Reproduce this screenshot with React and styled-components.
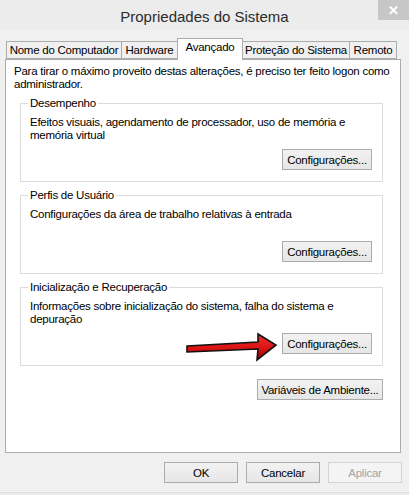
import React from "react";
import styled, { createGlobalStyle } from "styled-components";

// ===== Global =====

const GlobalStyle = createGlobalStyle`
  html, body {
    margin: 0;
    padding: 0;
    background: #f0f0f0;
  }
  body {
    font-family: "Liberation Sans", Arial, sans-serif;
    font-size: 11.5px;
    letter-spacing: -0.25px;
    color: #000;
  }
`;

// ===== Styled Components =====

const Window = styled.div`
  position: relative;
  width: 409px;
  height: 495px;
  background: #f0f0f0;
  display: flex;
  flex-direction: column;
  overflow: hidden;
`;

const TitleBar = styled.div`
  position: relative;
  height: 30px;
  display: flex;
  align-items: center;
  justify-content: center;
  background: #ececec;
`;

const Title = styled.div`
  font-size: 15px;
  letter-spacing: 0;
  color: #2b2b2b;
  margin-top: 2px;
`;

const CloseButton = styled.div`
  position: absolute;
  top: 0;
  right: 0;
  width: 31px;
  height: 20px;
  background: #c7c7c7;
  color: #fff;
  display: flex;
  align-items: center;
  justify-content: center;
  font-size: 13px;
  font-weight: bold;
`;

const TabRow = styled.div`
  display: flex;
  align-items: flex-end;
  padding-left: 6px;
  margin-top: 8px;
  height: 21px;
`;

const Tab = styled.div`
  position: relative;
  box-sizing: border-box;
  width: ${(p) => p.$w}px;
  height: ${(p) => (p.$active ? 22 : 18)}px;
  margin-left: ${(p) => (p.$first ? 0 : -1)}px;
  margin-bottom: ${(p) => (p.$active ? -1 : 0)}px;
  border: 1px solid #acacac;
  border-bottom: ${(p) => (p.$active ? "none" : "1px solid #acacac")};
  background: ${(p) => (p.$active ? "#fff" : "#f0f0f0")};
  z-index: ${(p) => (p.$active ? 2 : 1)};
  display: flex;
  align-items: ${(p) => (p.$active ? "flex-start" : "center")};
  padding-top: ${(p) => (p.$active ? 2 : 0)}px;
  justify-content: center;
  white-space: nowrap;
`;

const Panel = styled.div`
  box-sizing: border-box;
  margin: 0 8px 0 5px;
  height: 394px;
  background: #fff;
  border: 1px solid #acacac;
  padding: 5px 0 0 8px;
  display: flex;
  flex-direction: column;
`;

const Intro = styled.p`
  margin: 0;
  line-height: 13px;
  padding-right: 6px;
`;

const Group = styled.fieldset`
  box-sizing: border-box;
  margin: ${(p) => p.$top}px 0 0 6px;
  width: 363px;
  border: 1px solid #dcdcdc;
  padding: 6px 10px 11px 9px;
  display: flex;
  flex-direction: column;
  min-width: 0;
`;

const Legend = styled.legend`
  padding: 0 2px;
  margin-left: -2px;
  line-height: 13px;
`;

const Description = styled.p`
  margin: 0;
  line-height: 13px;
  min-height: 26px;
`;

const ButtonRow = styled.div`
  display: flex;
  justify-content: flex-end;
  gap: 8px;
  margin-top: ${(p) => p.$top || 0}px;
  padding-right: ${(p) => p.$right || 0}px;
`;

const Button = styled.div`
  box-sizing: border-box;
  width: ${(p) => p.$w}px;
  height: 21px;
  border: 1px solid ${(p) => (p.$disabled ? "#d3d3d3" : "#acacac")};
  background: ${(p) =>
    p.$disabled ? "#f4f4f4" : "linear-gradient(#f2f2f2, #e6e6e6)"};
  color: ${(p) => (p.$disabled ? "#a3a3a3" : "#000")};
  display: flex;
  align-items: center;
  justify-content: center;
  white-space: nowrap;
`;

const Footer = styled.div`
  display: flex;
  justify-content: flex-end;
  gap: 8px;
  padding: 9px 7px 0 0;
`;

const BottomEdge = styled.div`
  margin-top: 9px;
  border-top: 1px solid #dedede;
  flex: 1;
  background: #ebebeb;
`;

const ArrowOverlay = styled.svg`
  position: absolute;
  left: 183px;
  top: 330px;
  width: 100px;
  height: 35px;
  overflow: visible;
`;

// ===== Data =====

const tabs = [
  { label: "Nome do Computador", w: 116 },
  { label: "Hardware", w: 57 },
  { label: "Avançado", w: 66, active: true },
  { label: "Proteção do Sistema", w: 108 },
  { label: "Remoto", w: 48 },
];

const groups = [
  {
    title: "Desempenho",
    text: "Efeitos visuais, agendamento de processador, uso de memória e memória virtual",
    top: 6,
  },
  {
    title: "Perfis de Usuário",
    text: "Configurações da área de trabalho relativas à entrada",
    top: 7,
  },
  {
    title: "Inicialização e Recuperação",
    text: "Informações sobre inicialização do sistema, falha do sistema e depuração",
    top: 7,
  },
];

// ===== App =====

const App = () => {
  return (
    <>
      <GlobalStyle />
      <Window>
        <TitleBar>
          <Title>Propriedades do Sistema</Title>
          <CloseButton>✕</CloseButton>
        </TitleBar>

        <TabRow>
          {tabs.map((t, i) => (
            <Tab key={t.label} $w={t.w} $active={t.active} $first={i === 0}>
              {t.label}
            </Tab>
          ))}
        </TabRow>

        <Panel>
          <Intro>
            Para tirar o máximo proveito destas alterações, é preciso ter feito
            logon como administrador.
          </Intro>

          {groups.map((g) => (
            <Group key={g.title} $top={g.top}>
              <Legend>{g.title}</Legend>
              <Description>{g.text}</Description>
              <ButtonRow $top={7}>
                <Button $w={90}>Configurações...</Button>
              </ButtonRow>
            </Group>
          ))}

          <ButtonRow $top={13} $right={17}>
            <Button $w={126}>Variáveis de Ambiente...</Button>
          </ButtonRow>
        </Panel>

        <Footer>
          <Button $w={74}>OK</Button>
          <Button $w={74}>Cancelar</Button>
          <Button $w={74} $disabled>
            Aplicar
          </Button>
        </Footer>
        <BottomEdge />

        <ArrowOverlay viewBox="0 0 100 35">
          <defs>
            <linearGradient id="arrowRed" x1="0" y1="0" x2="0" y2="1">
              <stop offset="0" stopColor="#f03030" />
              <stop offset="0.6" stopColor="#d81010" />
              <stop offset="1" stopColor="#8a0000" />
            </linearGradient>
          </defs>
          <path
            d="M4 16 L75 12 L75 4 L93 15 L74 30 L75 19 L4 22 Z"
            fill="url(#arrowRed)"
            stroke="#111"
            strokeWidth="1.6"
            strokeLinejoin="miter"
          />
        </ArrowOverlay>
      </Window>
    </>
  );
};

export default App;
